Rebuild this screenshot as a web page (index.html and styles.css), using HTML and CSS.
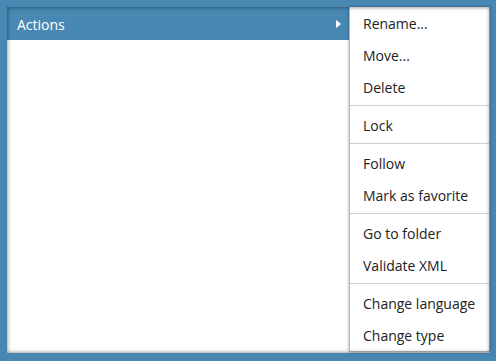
FILE: index.html
```html
<!DOCTYPE html>
<html lang="en">
<head>
<meta charset="utf-8"/>
<title>Actions</title>
<link rel="stylesheet" href="styles.css">
</head>
<body>
<div class="panel">
  <div class="actions-bar">
    <span class="actions-title">Actions</span>
    <span class="arrow"></span>
  </div>

  <!-- submenu -->
  <ul class="menu">
    <li>Rename...</li>
    <li>Move...</li>
    <li>Delete</li>
    <li class="sep"></li>
    <li>Lock</li>
    <li class="sep"></li>
    <li>Follow</li>
    <li>Mark as favorite</li>
    <li class="sep"></li>
    <li>Go to folder</li>
    <li>Validate XML</li>
    <li class="sep"></li>
    <li>Change language</li>
    <li>Change type</li>
  </ul>
</div>
</body>
</html>
```

FILE: styles.css
```css
body {
    margin: 0;
    padding: 7px 6px 8px 7px;
    background: #4887b1;
    font-family: 'Open Sans', sans-serif;
    font-size: 14px;
}

.panel {
    position: relative;
    height: 346px;
    background: white;
}

/* inner shadow of the frame */
.panel::after {
    content: "";
    position: absolute;
    inset: 0;
    box-shadow: inset 0 0 4px rgba(0,0,0,0.55);
    pointer-events: none;
}

.actions-bar {
    display: flex;
    align-items: center;
    justify-content: space-between;
    width: 343px;
    height: 33px;
    box-sizing: border-box;
    padding: 1px 9px 0 10px;
    background: #4888b3;
    color: white;
}

.arrow {
    width: 0;
    height: 0;
    border-top: 4px solid transparent;
    border-bottom: 4px solid transparent;
    border-left: 5px solid white;
}

.menu {
    position: absolute;
    top: 0;
    left: 342px;
    width: 141px;
    box-sizing: border-box;
    margin: 0;
    padding: 0;
    list-style: none;
    background: white;
    border: 1px solid #b8b8b8;
    border-top: none;
    box-shadow: 0 0 3px rgba(0,0,0,0.35);
    color: #222;
}

.menu li {
    height: 32px;
    line-height: 34px;
    padding-left: 13px;
    white-space: nowrap;
}

.menu li.sep {
    height: 1px;
    margin: 2px 0 3px;
    padding: 0;
    background: #cfcfcf;
}
```
